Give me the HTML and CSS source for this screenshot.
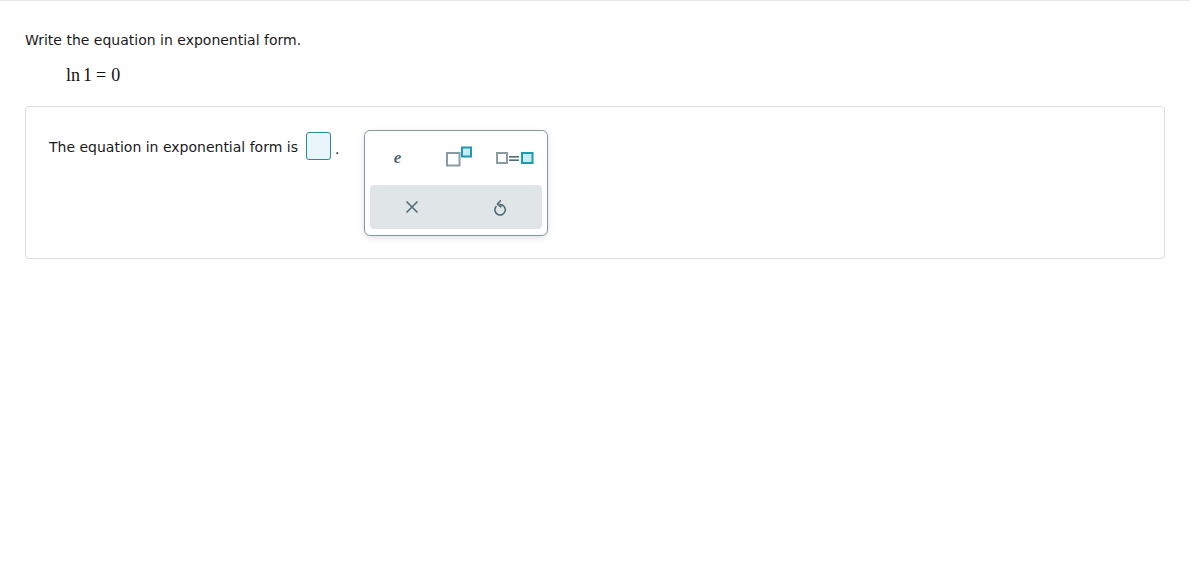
FILE: index.html
```html
<!DOCTYPE html>
<html>
<head>
<meta charset="utf-8">
<link rel="stylesheet" href="styles.css">
</head>
<body>
<div class="topline"></div>
<main class="content">
  <p class="prompt">Write the equation in exponential form.</p>
  <div class="given"><span>ln</span><span class="g1">1</span><span class="geq">=</span><span class="g0">0</span></div>
  <section class="panel">
    <div class="answer-line">
      <span class="label">The equation in exponential form is</span>
      <span class="answer-box"></span>
      <span class="period">.</span>
    </div>
    <div class="palette">
      <div class="palette-row">
        <button class="key key-e">e</button>
        <button class="key key-sup">
          <svg width="26" height="22" viewBox="0 0 26 22">
            <rect x="1" y="7" width="12.5" height="12.5" fill="#fff" stroke="#8a9ca3" stroke-width="2"/>
            <rect x="16" y="1.5" width="9" height="9" fill="#c6ecf2" stroke="#1a9bb0" stroke-width="2"/>
          </svg>
        </button>
        <button class="key key-eq">
          <svg width="40" height="14" viewBox="0 0 40 14">
            <rect x="2" y="2" width="10" height="10" fill="#fff" stroke="#8a9ca3" stroke-width="2"/>
            <rect x="14" y="5" width="10" height="1.6" fill="#4f6e78"/>
            <rect x="14" y="8.4" width="10" height="1.6" fill="#4f6e78"/>
            <rect x="27" y="2" width="10.5" height="10" fill="#c6ecf2" stroke="#1a9bb0" stroke-width="2"/>
          </svg>
        </button>
      </div>
      <div class="palette-actions">
        <button class="key key-x">
          <svg width="14" height="14" viewBox="0 0 14 14">
            <path d="M1.5 1.5 L12.5 12.5 M12.5 1.5 L1.5 12.5" stroke="#4f6e78" stroke-width="1.6" fill="none"/>
          </svg>
        </button>
        <button class="key key-undo">
          <svg width="14" height="17" viewBox="0 0 14 17">
            <path d="M3 7.6 A5.2 5.2 0 1 0 7 5.6" stroke="#4f6e78" stroke-width="1.6" fill="none" stroke-linecap="round"/>
            <path d="M7.4 1.8 L4.4 5.1 L7.8 7.8" stroke="#4f6e78" stroke-width="1.6" fill="none" stroke-linecap="round" stroke-linejoin="round"/>
          </svg>
        </button>
      </div>
    </div>
  </section>
</main>
</body>
</html>
```

FILE: styles.css
```css
html, body {
  margin: 0;
  padding: 0;
  background: #fff;
}
body {
  font-family: "DejaVu Sans", Verdana, sans-serif;
  font-size: 14px;
  color: #1a1a1a;
}
.topline {
  height: 1px;
  background: #e4e7e8;
}
.content {
  padding: 31px 25px 0 25px;
}
.prompt {
  margin: 0;
  line-height: 17px;
}
.given {
  font-family: "Liberation Serif", "Times New Roman", serif;
  font-size: 18px;
  line-height: 22px;
  margin: 15px 0 0 41px;
  color: #111;
  display: flex;
}
.given .g1 {
  margin-left: 3px;
}
.given .geq {
  margin-left: 4px;
}
.given .g0 {
  margin-left: 5px;
}
.panel {
  margin-top: 20px;
  border: 1px solid #d8dee1;
  border-radius: 4px;
  height: 153px;
  box-sizing: border-box;
  width: 1140px;
  display: flex;
  align-items: flex-start;
  padding: 23px 0 0 23px;
}
.answer-line {
  display: flex;
  align-items: center;
  margin-top: 2px;
}
.label {
  margin-top: 2px;
}
.answer-box {
  display: inline-block;
  width: 23px;
  height: 26px;
  border: 1px solid #2a8a98;
  border-radius: 3px;
  background: #e8f5f9;
  margin-left: 8px;
}
.period {
  margin-left: 4px;
  margin-top: 6px;
}
.palette {
  margin-left: 25px;
  width: 184px;
  height: 106px;
  box-sizing: border-box;
  border: 1px solid #7d9aa3;
  border-radius: 6px;
  box-shadow: 0 2px 6px rgba(0, 0, 0, 0.12);
  padding: 5px;
  background: #fff;
  display: flex;
  flex-direction: column;
}
.palette-row {
  height: 44px;
  padding-bottom: 4px;
  display: grid;
  grid-template-columns: 60px 52px 60px;
  align-items: center;
  justify-items: center;
}
.palette-actions {
  height: 44px;
  margin-top: 1px;
  background: #e0e6e8;
  border-radius: 4px;
  display: grid;
  grid-template-columns: 1fr 1fr;
  align-items: center;
  justify-items: center;
}
.key {
  background: none;
  border: 0;
  padding: 0;
  margin: 0;
  display: flex;
  align-items: center;
  justify-content: center;
  cursor: pointer;
}
.key-e {
  font-family: "Liberation Serif", "Times New Roman", serif;
  font-style: italic;
  font-weight: bold;
  font-size: 17px;
  color: #4a6a74;
  margin-right: 6px;
}
.key-sup {
  margin-left: 6px;
  margin-top: -2px;
}
.key-eq {
  margin-left: 6px;
}
.key-x {
  margin-right: 2px;
}
.key-undo {
  margin-left: 2px;
}
```
